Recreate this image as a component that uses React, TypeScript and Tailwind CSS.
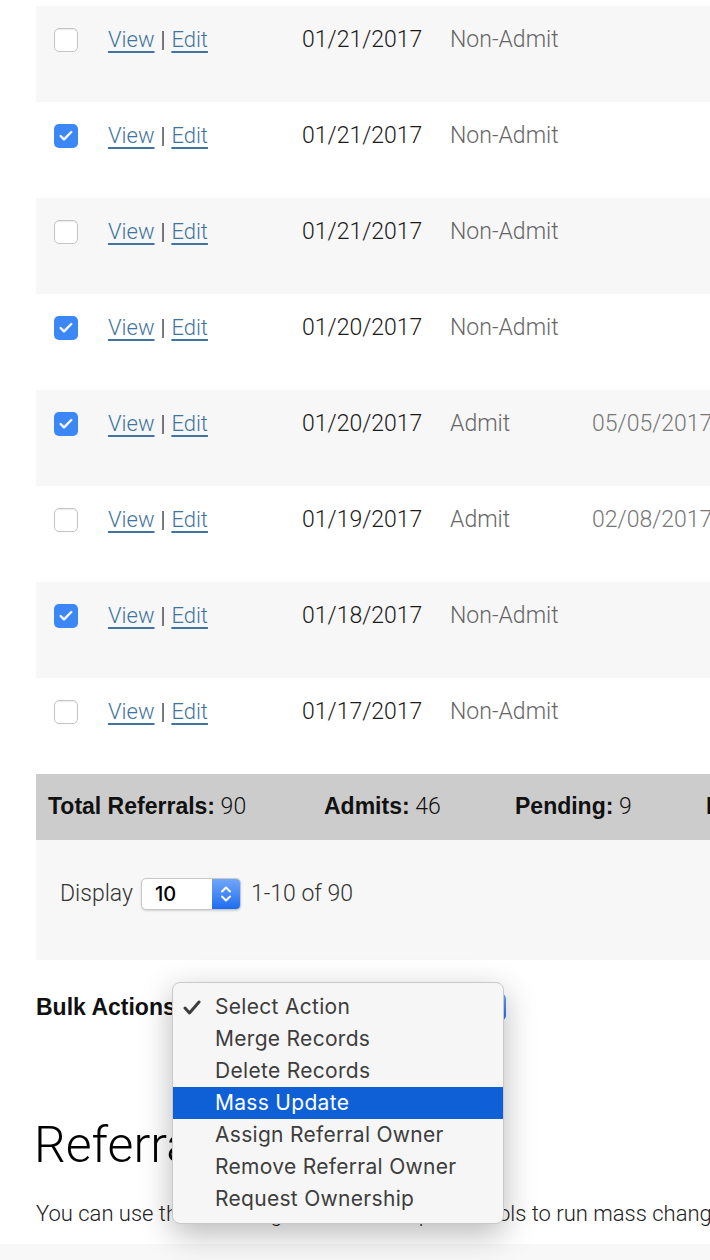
import { Check } from "lucide-react"

type Row = {
  checked: boolean
  date: string
  status: string
  admitDate?: string
}

const rows: Row[] = [
  { checked: false, date: "01/21/2017", status: "Non-Admit" },
  { checked: true, date: "01/21/2017", status: "Non-Admit" },
  { checked: false, date: "01/21/2017", status: "Non-Admit" },
  { checked: true, date: "01/20/2017", status: "Non-Admit" },
  { checked: true, date: "01/20/2017", status: "Admit", admitDate: "05/05/2017" },
  { checked: false, date: "01/19/2017", status: "Admit", admitDate: "02/08/2017" },
  { checked: true, date: "01/18/2017", status: "Non-Admit" },
  { checked: false, date: "01/17/2017", status: "Non-Admit" },
]

const actions = [
  "Select Action",
  "Merge Records",
  "Delete Records",
  "Mass Update",
  "Assign Referral Owner",
  "Remove Referral Owner",
  "Request Ownership",
]

const font = "font-['Roboto','Liberation_Sans',sans-serif] font-light"
const bold = "font-['Liberation_Sans',sans-serif] font-bold"

function Checkbox({ checked }: { checked: boolean }) {
  if (checked) {
    return (
      <div className="flex h-[24px] w-[24px] items-center justify-center rounded-[5px] bg-[#3b87f5]">
        <Check className="h-[16px] w-[16px] text-white" strokeWidth={3.5} />
      </div>
    )
  }
  return (
    <div className="h-[24px] w-[24px] rounded-[5px] border border-[#c4c4c4] bg-white shadow-[inset_0_1px_1px_rgba(0,0,0,0.08)]" />
  )
}

export default function App() {
  return (
    <div className={`relative h-[1260px] w-[710px] overflow-hidden bg-white ${font} text-[23px] text-[#222]`}>
      {/* Table */}
      <div className="ml-[36px] mt-[6px] w-[820px]">
        {rows.map((row, i) => (
          <div
            key={i}
            className={`flex h-[96px] items-start ${i % 2 === 0 ? "bg-[#f7f7f7]" : "bg-white"}`}
          >
            <div className="w-[72px] pl-[18px] pt-[22px]">
              <Checkbox checked={row.checked} />
            </div>
            <div className="flex w-[194px] items-center gap-[6px] pt-[18px] text-[22px] leading-[32px]">
              <a className="text-[#3f74a0] underline decoration-[2px] underline-offset-[4px]">View</a>
              <span className="text-[#111]">|</span>
              <a className="text-[#3f74a0] underline decoration-[2px] underline-offset-[4px]">Edit</a>
            </div>
            <div className="w-[148px] pt-[18px] leading-[32px] text-[#1a1a1a]">{row.date}</div>
            <div className="w-[142px] pt-[18px] leading-[32px] text-[#666]">{row.status}</div>
            <div className="pt-[18px] leading-[32px] text-[#777]">{row.admitDate}</div>
          </div>
        ))}

        {/* Totals */}
        <div className="flex h-[66px] items-center bg-[#cccccc] pl-[12px] text-[#111]">
          <div className="w-[276px] whitespace-nowrap">
            <span className={bold}>Total Referrals:</span> 90
          </div>
          <div className="w-[191px] whitespace-nowrap">
            <span className={bold}>Admits:</span> 46
          </div>
          <div className="w-[191px] whitespace-nowrap">
            <span className={bold}>Pending:</span> 9
          </div>
          <div className="whitespace-nowrap">
            <span className={bold}>Denied:</span> 35
          </div>
        </div>

        {/* Pagination */}
        <div className="flex h-[120px] items-start bg-[#f7f7f7] pl-[24px] pt-[38px]">
          <span className="leading-[32px] text-[#333]">Display</span>
          <div className="ml-[8px] flex h-[32px] w-[100px] overflow-hidden rounded-[5px] border border-[#c8c8c8] bg-white shadow-[0_1px_2px_rgba(0,0,0,0.15)]">
            <span className="flex-1 pl-[13px] font-['Inter',sans-serif] text-[20px] font-medium leading-[30px] text-black">10</span>
            <div className="flex w-[28px] items-center justify-center bg-gradient-to-b from-[#6fa6f8] to-[#1b6cf2]">
              <svg width="12" height="20" viewBox="0 0 12 20" fill="none" stroke="white" strokeWidth="2" strokeLinecap="round" strokeLinejoin="round">
                <path d="M2 7.5 6 3.5l4 4" />
                <path d="M2 12.5l4 4 4-4" />
              </svg>
            </div>
          </div>
          <span className="ml-[10px] leading-[32px] text-[#333]">1-10 of 90</span>
        </div>
      </div>

      {/* Bulk actions */}
      <div className="ml-[36px] mt-[31px] flex h-[32px] items-center">
        <span className={`${bold} text-[#111]`}>Bulk Actions:</span>
        <div className="ml-[6px] h-[28px] w-[317px] rounded-[6px] bg-gradient-to-b from-[#6fa6f8] to-[#1b6cf2]" />
      </div>

      <h2 className="ml-[34px] mt-[92px] text-[50px] font-light leading-[60px] text-black">Referral Tools</h2>
      <p className="ml-[36px] mt-[23px] whitespace-nowrap text-[22px] leading-[32px] text-[#222]">
        You can use the following referral bulk update tools to run mass changes
      </p>

      <div className="absolute bottom-0 left-0 h-[16px] w-full bg-[#f8f8f8]" />

      {/* Open select menu */}
      <div className="absolute left-[172px] top-[982px] w-[332px] rounded-[8px] border border-[#c9c9c9] bg-[#f6f6f6] py-[8px] font-['Inter',sans-serif] text-[21px] font-normal tracking-[0.3px] shadow-[0_10px_32px_rgba(0,0,0,0.28)]">
        {actions.map((a, i) => (
          <div
            key={a}
            className={`relative flex h-[32px] items-center pl-[42px] ${i === 3 ? "bg-[#0f5fd6] text-white" : "text-[#3d3d3d]"}`}
          >
            {i === 0 && (
              <svg className="absolute left-[10px] top-[9px]" width="18" height="15" viewBox="0 0 18 15" fill="none" stroke="#3d3d3d" strokeWidth="3" strokeLinecap="round" strokeLinejoin="round">
                <path d="M2 8l4.5 5L16 2" />
              </svg>
            )}
            {a}
          </div>
        ))}
      </div>
    </div>
  )
}
